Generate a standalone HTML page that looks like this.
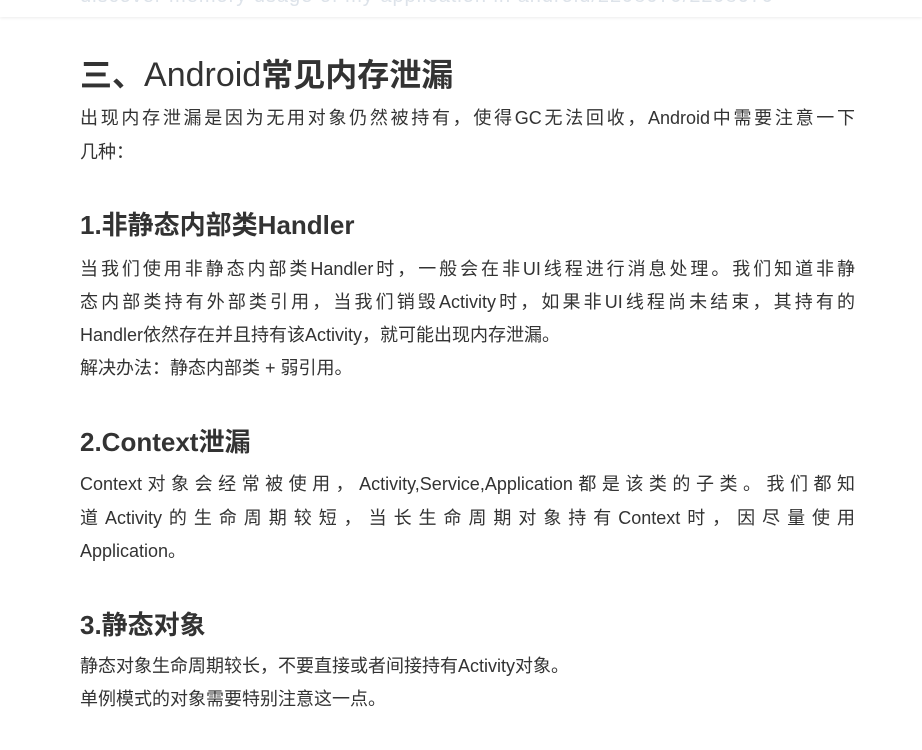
<!DOCTYPE html>
<html><head><meta charset="utf-8"><style>
body{margin:0;width:922px;height:750px;background:#fff;overflow:hidden;position:relative;font-family:"Liberation Sans","Noto Sans CJK SC",sans-serif;color:#333}
.top{position:absolute;left:0;top:0;width:922px;height:17px;background:#fff;box-shadow:0 1px 3px rgba(0,0,0,.08);overflow:hidden}
.top div{position:absolute;left:80px;top:-15px;font-size:20px;color:#dde3ea;white-space:nowrap;letter-spacing:1px}
.l{position:absolute;left:80px;width:775px;font-size:18px;line-height:34px;height:34px;white-space:nowrap;color:#333}
.j{text-align:justify;text-align-last:justify}
h1,h2{position:absolute;left:80px;margin:0;font-weight:bold;color:#333;white-space:nowrap}
h1{font-size:32px;line-height:40px}
h1 span{font-weight:normal;font-size:34px}
h2{font-size:26px;line-height:34px}
</style></head><body>
<div class="top"><div>discover memory usage of my application in android/2298079/2298079</div></div>
<h1 style="top:55px">三、<span>Android</span>常见内存泄漏</h1>
<div class="l j" style="top:101px">出现内存泄漏是因为无用对象仍然被持有，使得GC无法回收，Android中需要注意一下</div>
<div class="l" style="top:135px">几种：</div>
<h2 style="top:208px">1.非静态内部类Handler</h2>
<div class="l j" style="top:252px">当我们使用非静态内部类Handler时，一般会在非UI线程进行消息处理。我们知道非静</div>
<div class="l j" style="top:285px">态内部类持有外部类引用，当我们销毁Activity时，如果非UI线程尚未结束，其持有的</div>
<div class="l" style="top:318px">Handler依然存在并且持有该Activity，就可能出现内存泄漏。</div>
<div class="l" style="top:351px">解决办法：静态内部类 + 弱引用。</div>
<h2 style="top:425px">2.Context泄漏</h2>
<div class="l j" style="top:467px">Context对象会经常被使用，Activity,Service,Application都是该类的子类。我们都知</div>
<div class="l j" style="top:501px">道Activity的生命周期较短，当长生命周期对象持有Context时，因尽量使用</div>
<div class="l" style="top:534px">Application。</div>
<h2 style="top:608px">3.静态对象</h2>
<div class="l" style="top:649px">静态对象生命周期较长，不要直接或者间接持有Activity对象。</div>
<div class="l" style="top:682px">单例模式的对象需要特别注意这一点。</div>
</body></html>
